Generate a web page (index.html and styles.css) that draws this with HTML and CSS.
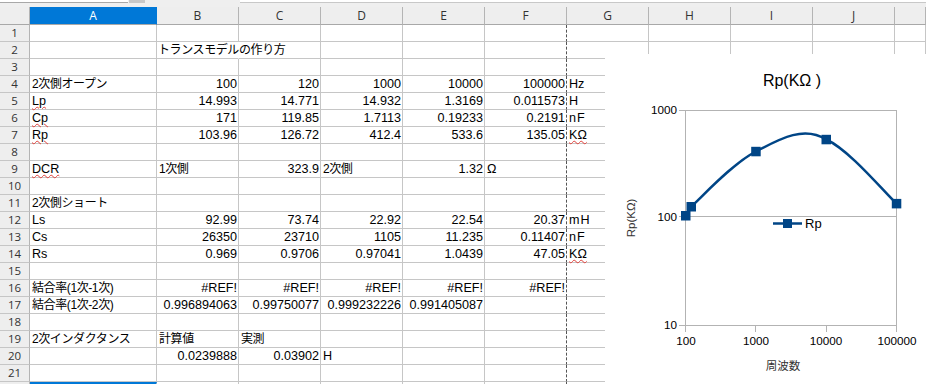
FILE: index.html
```html
<!DOCTYPE html>
<html lang="ja">
<head>
  <meta charset="UTF-8">
  <meta name="viewport" content="width=device-width, initial-scale=1">
  <title>トランスモデルの作り方</title>
  <link rel="stylesheet" href="styles.css">
</head>
<body>

<div class="toolbar">
  <div class="namebox"></div>
  <div class="namebtn"></div>
  <div class="formula"></div>
</div>

<div class="sheet" id="sheet">
  <div class="row head">
    <div class="cell corner"></div>
    <div class="cell col sel">A</div>
    <div class="cell col">B</div>
    <div class="cell col">C</div>
    <div class="cell col">D</div>
    <div class="cell col">E</div>
    <div class="cell col">F</div>
    <div class="cell col">G</div>
    <div class="cell col">H</div>
    <div class="cell col">I</div>
    <div class="cell col">J</div>
    <div class="cell col"></div>
  </div>

  <!-- グラフ (シートの上に重ねる) -->
  <svg id="chart" class="chart" viewBox="605 54 321 330" width="321" height="330">
    <rect x="605" y="54" width="321" height="330" fill="#fff"/>
    <text x="792" y="86" class="ch-title" text-anchor="middle">Rp(KΩ )</text>

    <rect x="685.5" y="110.5" width="211" height="215" fill="none" stroke="#b3b3b3"/>
    <line x1="685.5" y1="216.5" x2="896.5" y2="216.5" stroke="#b3b3b3"/>

    <g stroke="#b3b3b3">
      <line x1="679" y1="110.5" x2="685.5" y2="110.5"/>
      <line x1="679" y1="216.5" x2="685.5" y2="216.5"/>
      <line x1="679" y1="325.5" x2="685.5" y2="325.5"/>
      <line x1="685.5" y1="325.5" x2="685.5" y2="332"/>
      <line x1="755.5" y1="325.5" x2="755.5" y2="332"/>
      <line x1="826.5" y1="325.5" x2="826.5" y2="332"/>
      <line x1="896.5" y1="325.5" x2="896.5" y2="332"/>
    </g>

    <g class="ch-label" text-anchor="end">
      <text x="677" y="114">1000</text>
      <text x="677" y="221">100</text>
      <text x="677" y="329">10</text>
    </g>
    <g class="ch-label" text-anchor="middle">
      <text x="686" y="345">100</text>
      <text x="756" y="345">1000</text>
      <text x="826" y="345">10000</text>
      <text x="897" y="345">100000</text>
    </g>
    <text x="783" y="370" class="ch-axis" text-anchor="middle">周波数</text>
    <text transform="translate(635 218) rotate(-90)" class="ch-axis" text-anchor="middle">Rp(KΩ)</text>

    <path d="M685.7 215.9 L691.3 206.6 C703 195.9 733.5 162.7 755.95 151.5 C778 140 803 125 826.2 139.5 C849.6 150 884.8 192.9 896.5 203.6"
          fill="none" stroke="#004586" stroke-width="2.5"/>
    <g fill="#004586">
      <rect x="681" y="211" width="9.5" height="9.5"/>
      <rect x="686.5" y="202" width="9.5" height="9.5"/>
      <rect x="751.2" y="146.8" width="9.5" height="9.5"/>
      <rect x="821.5" y="134.8" width="9.5" height="9.5"/>
      <rect x="891.8" y="198.9" width="9.5" height="9.5"/>
    </g>

    <line x1="773" y1="223.5" x2="802" y2="223.5" stroke="#004586" stroke-width="2.5"/>
    <rect x="783" y="219" width="9" height="9" fill="#004586"/>
    <text x="805" y="228" class="ch-legend">Rp</text>
  </svg>
</div>

<script>
// 各行のデータ (A列から)
const data = {
  2: ['', '>トランスモデルの作り方'],
  4: ['2次側オープン', 100, 120, 1000, 10000, 100000, 'Hz'],
  5: ['~Lp', 14.993, 14.771, 14.932, 1.3169, 0.011573, 'H'],
  6: ['~Cp', 171, 119.85, 1.7113, 0.19233, 0.2191, 'nF'],
  7: ['~Rp', 103.96, 126.72, 412.4, 533.6, 135.05, '~KΩ'],
  9: ['~DCR', '1次側', 323.9, '2次側', 1.32, 'Ω'],
  11: ['2次側ショート'],
  12: ['Ls', 92.99, 73.74, 22.92, 22.54, 20.37, 'mH'],
  13: ['Cs', 26350, 23710, 1105, 11.235, 0.11407, 'nF'],
  14: ['Rs', 0.969, 0.9706, 0.97041, 1.0439, 47.05, '~KΩ'],
  16: ['結合率(1次-1次)', '#REF!', '#REF!', '#REF!', '#REF!', '#REF!'],
  17: ['結合率(1次-2次)', 0.996894063, 0.99750077, 0.999232226, 0.991405087],
  19: ['2次インダクタンス', '計算値', '実測'],
  20: ['', 0.0239888, 0.03902, 'H']
};

const sheet = document.getElementById('sheet');
const chart = document.getElementById('chart');

function makeCell(v, c) {
  const cell = document.createElement('div');
  cell.className = 'cell';
  if (c === 5) cell.classList.add('brk');
  if (v === undefined || v === '') return cell;

  if (typeof v === 'number' || String(v).startsWith('#')) {
    cell.classList.add('num');
    cell.textContent = String(v);
    return cell;
  }

  let text = String(v);
  if (text.startsWith('>')) {
    // 右のセルにはみ出す文字
    text = text.slice(1);
    cell.classList.add('spill');
  }
  if (/[\u3000-\u9fff]/.test(text)) cell.classList.add('jp');
  if (text.startsWith('~')) {
    const span = document.createElement('span');
    span.className = 'typo';
    span.textContent = text.slice(1);
    cell.appendChild(span);
  } else {
    cell.textContent = text;
  }
  if (text === 'nF' || text === 'mH') cell.classList.add('unit');
  return cell;
}

function renderSheet() {
  for (let r = 1; r <= 22; r++) {
    const row = document.createElement('div');
    row.className = 'row';
    const rh = document.createElement('div');
    rh.className = 'cell rh';
    // 22行目は画面の下端で切れるので番号は出さない
    if (r < 22) rh.textContent = r;
    row.appendChild(rh);

    const vals = data[r] || [];
    for (let c = 0; c < 11; c++) {
      const cell = makeCell(vals[c], c);
      if (r === 22 && c === 0) cell.classList.add('cursor');
      row.appendChild(cell);
    }
    sheet.insertBefore(row, chart);
  }
}

renderSheet();
</script>

</body>
</html>
```

FILE: styles.css
```css
body {
  margin: 0;
  font-family: "Liberation Sans", "Noto Sans CJK JP", sans-serif;
  font-size: 12.6px;
  color: #000;
  background: #fff;
  overflow: hidden;
}
.toolbar {
  display: flex;
  align-items: flex-start;
  height: 7px;
  background: #efefef;
}
.namebox {
  width: 128px;
  height: 2px;
  background: #fff;
  border-bottom: 1px solid #a8a8a8;
}
.namebtn {
  width: 16px;
  height: 3px;
  margin-left: 1px;
  background: #c8c8c8;
}
.formula {
  flex: 1;
  height: 2px;
  margin-left: 95px;
  background: #fff;
  border-bottom: 1px solid #c8c8c8;
}
.sheet {
  position: relative;
}
.row {
  display: grid;
  grid-template-columns: 30px 127px repeat(9, 82px) 31px;
  height: 17px;
}
.row.head {
  height: 18px;
}
.cell {
  box-sizing: border-box;
  height: 100%;
  padding: 0 2px;
  border-right: 1px solid #c6c6c6;
  border-bottom: 1px solid #c6c6c6;
  line-height: 16px;
  white-space: nowrap;
  overflow: visible;
}
.head .cell {
  background: #eeeeee;
  border-right-color: #b4b4b4;
  border-bottom-color: #a8a8a8;
  font-family: "Open Sans", "Liberation Sans", sans-serif;
  font-size: 12px;
  line-height: 17px;
  color: #333;
  text-align: center;
}
.head .sel {
  background: #0078d7;
  color: #fff;
  border-right-color: #0078d7;
}
.rh {
  background: #eeeeee;
  border-right-color: #b4b4b4;
  font-family: "Open Sans", "Liberation Sans", sans-serif;
  font-size: 11.5px;
  color: #333;
  text-align: center;
  padding: 0;
}
.num {
  text-align: right;
  padding-right: 1px;
}
.jp {
  font-size: 12px;
  letter-spacing: -0.4px;
}
.spill {
  border-right-color: transparent;
  padding-left: 1px;
}
.brk {
  border-right: 1px dashed #555;
}
.unit {
  letter-spacing: 1px;
}
.typo {
  text-decoration: underline wavy #e0403a;
  text-decoration-thickness: 1px;
  text-underline-offset: 1px;
}
.cursor {
  border-top: 2px solid #0078d7;
}
.chart {
  position: absolute;
  left: 605px;
  top: 47px;
  display: block;
}
.ch-title {
  font-size: 16px;
  fill: #000;
}
.ch-label {
  font-size: 11.7px;
  fill: #000;
}
.ch-axis {
  font-size: 11.5px;
  fill: #333;
}
.ch-legend {
  font-size: 13px;
  fill: #000;
}
```
